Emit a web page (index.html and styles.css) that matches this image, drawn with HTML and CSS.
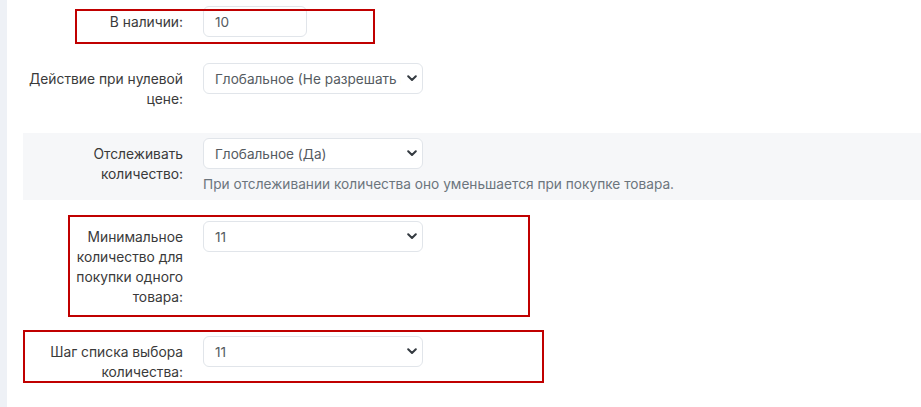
FILE: index.html
```html
<!DOCTYPE html>
<html lang="ru">
<head>
<meta charset="utf-8">
<link rel="stylesheet" href="styles.css">
</head>
<body>
<div class="page">
  <aside class="sidebar"></aside>
  <main class="main">
    <div class="row">
      <label class="label">В наличии:</label>
      <div class="field"><input class="input input-short" type="text" value="10"></div>
      <span class="mark mark-1"></span>
    </div>
    <div class="row">
      <label class="label">Действие при нулевой цене:</label>
      <div class="field">
        <select class="select"><option>Глобальное (Не разрешать покупку)</option></select>
      </div>
    </div>
    <div class="row row-gray">
      <label class="label">Отслеживать количество:</label>
      <div class="field">
        <select class="select"><option>Глобальное (Да)</option></select>
        <div class="help">При отслеживании количества оно уменьшается при покупке товара.</div>
      </div>
    </div>
    <div class="row">
      <label class="label">Минимальное количество для покупки одного товара:</label>
      <div class="field">
        <select class="select"><option>11</option></select>
      </div>
      <span class="mark mark-2"></span>
    </div>
    <div class="row">
      <label class="label">Шаг списка выбора количества:</label>
      <div class="field">
        <select class="select"><option>11</option></select>
      </div>
      <span class="mark mark-3"></span>
    </div>
  </main>
</div>
</body>
</html>
```

FILE: styles.css
```css
* { box-sizing: border-box; }
html, body { margin: 0; padding: 0; background: #fff; }
body {
  font-family: Inter, "Noto Sans", "Liberation Sans", sans-serif;
  font-size: 14px;
  color: #3a3a3a;
}
.page { display: flex; min-height: 407px; }
.sidebar { width: 7px; flex: none; background: #eef1f6; }
.main { flex: 1; padding: 1px 0 0 16px; display: flex; flex-direction: column; gap: 16px; }
.row {
  position: relative;
  display: grid;
  grid-template-columns: 170px 1fr;
  column-gap: 10px;
  padding: 5px 0;
}
.row-gray { background: #f6f7f9; }
.label {
  text-align: right;
  padding: 6px 10px 3px 0;
  line-height: 20px;
  font-size: 13.8px;
  color: #3a3a3a;
}
.field { display: flex; flex-direction: column; align-items: flex-start; }
.input, .select {
  font-family: inherit;
  font-size: 13.6px;
  color: #555b61;
  height: 31px;
  border: 1px solid #e1e5ea;
  border-radius: 6px;
  background-color: #fff;
  outline: none;
  margin: 0;
}
.input { padding: 0 11px; }
.input-short { width: 104px; }
.select {
  width: 220px;
  -webkit-appearance: none;
  appearance: none;
  padding: 0 21px 0 11px;
  background-image: url("data:image/svg+xml,%3Csvg xmlns='http://www.w3.org/2000/svg' viewBox='0 0 10 7'%3E%3Cpath d='M1.2 1.2 5 5 8.8 1.2' fill='none' stroke='%23343a40' stroke-width='2' stroke-linecap='round' stroke-linejoin='round'/%3E%3C/svg%3E");
  background-repeat: no-repeat;
  background-position: right 5px center;
  background-size: 10px 7px;
}
.help {
  margin-top: 5px;
  line-height: 21px;
  color: #6c757d;
  font-size: 13.7px;
}
.mark {
  position: absolute;
  border: 2px solid #c00000;
  pointer-events: none;
}
.mark-1 { left: 52px; top: 8px; width: 300px; height: 35px; }
.mark-2 { left: 45px; top: -1px; width: 462px; height: 102px; }
.mark-3 { left: 0; top: -1px; width: 521px; height: 53px; }
```
